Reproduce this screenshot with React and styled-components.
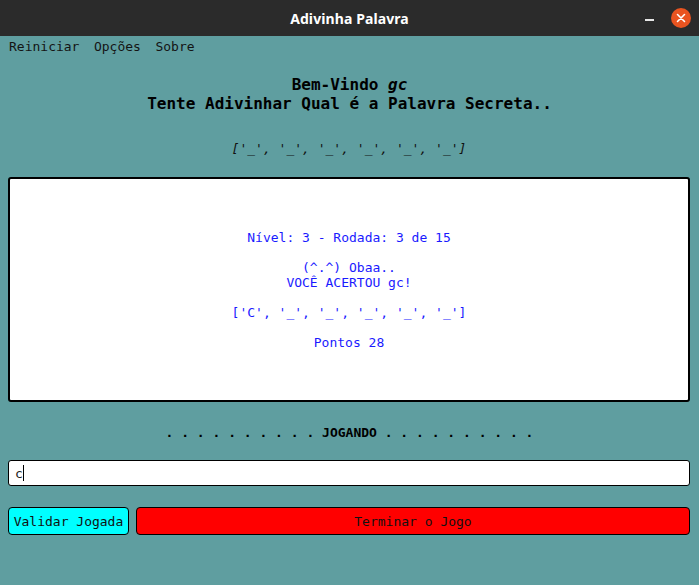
import React from "react";
import styled, { createGlobalStyle } from "styled-components";

const Global = createGlobalStyle`
  html, body { margin: 0; padding: 0; background: #5f9ea0; }
  body { width: 699px; height: 585px; overflow: hidden; }
  * { box-sizing: border-box; }
`;

const Window = styled.div`
  width: 699px;
  height: 585px;
  background: #5f9ea0;
  display: flex;
  flex-direction: column;
  font-family: "DejaVu Sans Mono", monospace;
  color: #000;
`;

const TitleBar = styled.div`
  height: 36px;
  background: #2b2b2b;
  position: relative;
  display: flex;
  align-items: center;
  justify-content: center;
`;

const Title = styled.div`
  font-family: "Noto Sans", "Open Sans", sans-serif;
  font-weight: 700;
  font-size: 14px;
  color: #ffffff;
  letter-spacing: 0.1px;
`;

const Controls = styled.div`
  position: absolute;
  right: 8px;
  top: 0;
  height: 36px;
  display: flex;
  align-items: center;
  gap: 17px;
`;

const Minimize = styled.div`
  width: 9px;
  height: 1.5px;
  background: #e6e6e6;
  margin-top: 4px;
`;

const Close = styled.div`
  width: 20px;
  height: 20px;
  border-radius: 50%;
  background: #e95420;
  display: flex;
  align-items: center;
  justify-content: center;
`;

const MenuBar = styled.div`
  height: 20px;
  display: flex;
  align-items: center;
  padding-left: 9px;
  padding-top: 2px;
  gap: 14.5px;
  font-size: 13px;
  color: #141414;
`;

const MenuItem = styled.span`
  line-height: 18px;
`;

const Main = styled.div`
  display: flex;
  flex-direction: column;
  padding: 0 9px 0 8px;
`;

const Header = styled.div`
  margin-top: 18.5px;
  text-align: center;
  font-size: 16px;
  font-weight: 700;
  line-height: 19px;
  padding-left: 1px;
`;

const Pattern = styled.div`
  margin-top: 28px;
  text-align: center;
  font-size: 13px;
  font-style: italic;
  line-height: 15px;
  color: #111;
`;

const Card = styled.div`
  margin-top: 21.5px;
  height: 225px;
  background: #ffffff;
  border: 2px solid #000;
  border-radius: 3px;
  display: flex;
  flex-direction: column;
  align-items: center;
  justify-content: center;
  color: #1a1aff;
  font-size: 13px;
  line-height: 15px;
  text-align: center;
`;

const CardLine = styled.div`
  min-height: 15px;
  white-space: pre;
`;

const Status = styled.div`
  margin-top: 22.5px;
  text-align: center;
  font-size: 13px;
  line-height: 15px;
  white-space: pre;
  padding-left: 1px;
`;

const Dots = styled.span`
  font-weight: 700;
`;

const Strong = styled.span`
  font-weight: 700;
`;

const InputBox = styled.div`
  margin-top: 20.5px;
  height: 26px;
  background: #fff;
  border: 1px solid #000;
  border-radius: 3px;
  display: flex;
  align-items: center;
  padding-left: 6px;
  font-size: 13px;
  color: #222;
`;

const Caret = styled.span`
  display: inline-block;
  width: 1px;
  height: 16px;
  background: #000;
  margin-left: 0.5px;
`;

const ButtonRow = styled.div`
  margin-top: 21px;
  display: flex;
  gap: 7px;
`;

const Button = styled.button`
  height: 28px;
  width: ${(p) => (p.$grow ? "auto" : "121px")};
  flex: ${(p) => (p.$grow ? "1" : "none")};
  background: ${(p) => p.$bg};
  border: 1px solid #000;
  border-radius: 4px;
  font-family: "DejaVu Sans Mono", monospace;
  font-size: 13px;
  color: #111;
  padding: 0;
  display: flex;
  align-items: center;
  justify-content: center;
`;

export default function App() {
  const dots = ". . . . . . . . . .";
  return (
    <>
      <Global />
      <Window>
        <TitleBar>
          <Title>Adivinha Palavra</Title>
          <Controls>
            <Minimize />
            <Close>
              <svg width="10" height="10" viewBox="0 0 10 10">
                <path d="M1.5 1.5 L8.5 8.5 M8.5 1.5 L1.5 8.5" stroke="#fff" strokeWidth="1.6" strokeLinecap="round" />
              </svg>
            </Close>
          </Controls>
        </TitleBar>
        <MenuBar>
          <MenuItem>Reiniciar</MenuItem>
          <MenuItem>Opções</MenuItem>
          <MenuItem>Sobre</MenuItem>
        </MenuBar>
        <Main>
          <Header>
            <div>
              Bem-Vindo <i>gc</i>
            </div>
            <div>Tente Adivinhar Qual é a Palavra Secreta..</div>
          </Header>
          <Pattern>['_', '_', '_', '_', '_', '_']</Pattern>
          <Card>
            <CardLine>Nível: 3 - Rodada: 3 de 15</CardLine>
            <CardLine />
            <CardLine>(^.^) Obaa..</CardLine>
            <CardLine>VOCÊ ACERTOU gc!</CardLine>
            <CardLine />
            <CardLine>['C', '_', '_', '_', '_', '_']</CardLine>
            <CardLine />
            <CardLine>Pontos 28</CardLine>
          </Card>
          <Status>
            <Dots>{dots}</Dots> <Strong>JOGANDO</Strong> <Dots>{dots}</Dots>
          </Status>
          <InputBox>
            c<Caret />
          </InputBox>
          <ButtonRow>
            <Button $bg="#00ffff">Validar Jogada</Button>
            <Button $bg="#ff0000" $grow>
              Terminar o Jogo
            </Button>
          </ButtonRow>
        </Main>
      </Window>
    </>
  );
}
